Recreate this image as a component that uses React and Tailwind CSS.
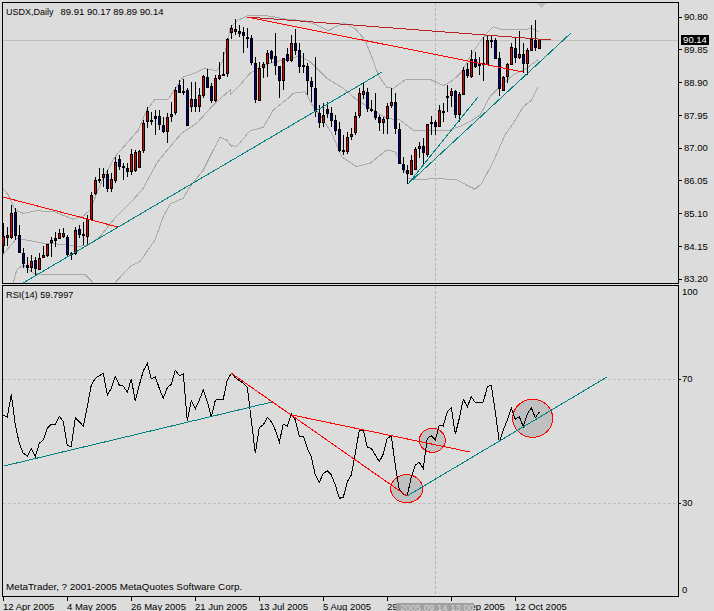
const c1 = [[670,760,708,735,'r'],[680,738,707,711,'r'],[615,718,640,713,'r'],[625,720,637,705,'b'],[675,760,705,758,'b'],[745,805,760,790,'b'],[770,820,795,802,'b'],[765,815,785,802,'r'],[770,825,780,805,'b'],[760,810,775,808,'r'],[738,775,766,772,'r'],[733,770,733,765,'r'],[712,770,720,728,'r'],[695,740,715,722,'b'],[688,718,700,716,'r'],[685,715,700,708,'r'],[705,770,712,762,'b'],[755,780,760,763,'b'],[680,765,690,760,'r'],[675,715,688,702,'b'],[665,735,702,706,'b'],[645,735,657,708,'r'],[577,660,585,658,'r'],[530,585,540,580,'r'],[505,550,537,540,'b'],[505,560,522,532,'r'],[510,575,522,565,'b'],[520,575,537,565,'r'],[470,550,488,540,'r'],[465,510,477,500,'b'],[490,540,500,503,'b'],[490,530,505,515,'b'],[448,525,463,515,'r'],[450,515,458,510,'r'],[450,503,455,502,'r'],[360,460,370,452,'r'],[320,385,335,365,'r'],[335,375,361,364,'b'],[330,405,350,355,'b'],[330,390,350,373,'b'],[352,400,375,395,'b'],[340,430,352,395,'r'],[305,365,343,350,'r'],[260,345,272,338,'r'],[240,280,255,278,'b'],[238,285,273,277,'b'],[265,375,272,375,'b'],[245,335,297,320,'r'],[245,335,297,320,'b'],[265,335,285,320,'r'],[225,295,230,285,'r'],[207,265,232,262,'b'],[250,310,260,302,'b'],[225,305,235,302,'r'],[185,240,225,235,'r'],[155,228,222,225,'b'],[115,230,118,220,'r']];
const c2 = [[75,118,85,97,'r'],[58,105,88,95,'b'],[75,110,95,99,'b'],[80,160,98,107,'b'],[85,145,112,116,'b'],[105,195,115,188,'b'],[170,310,190,298,'b'],[185,302,205,302,'r'],[185,235,193,203,'r'],[150,230,160,190,'r'],[150,190,153,175,'b'],[100,225,168,197,'b'],[200,295,200,242,'b'],[175,270,175,240,'r'],[145,185,163,180,'b'],[105,185,130,180,'r'],[87,165,130,150,'b'],[130,220,150,200,'b'],[160,220,197,200,'b'],[190,285,198,242,'b'],[230,305,243,260,'b'],[170,350,265,335,'b'],[315,385,340,368,'b'],[310,380,345,368,'r'],[305,355,328,340,'b'],[320,380,340,360,'b'],[345,405,360,390,'b'],[365,455,388,450,'b'],[405,465,450,453,'b'],[395,462,412,455,'r'],[385,420,403,410,'r'],[335,405,348,398,'r'],[265,355,280,347,'r'],[250,298,273,282,'r'],[265,335,277,325,'b'],[300,335,328,331,'b'],[280,360,333,353,'b'],[345,392,352,368,'b'],[350,402,358,368,'r'],[310,402,318,355,'r'],[265,325,307,315,'r'],[280,402,307,385,'b'],[370,490,387,490,'b'],[470,518,493,508,'b'],[495,552,512,520,'b'],[465,525,482,523,'r'],[440,510,447,507,'r'],[425,475,438,445,'r'],[415,495,438,458,'b'],[372,470,373,463,'r'],[347,405,366,370,'r'],[360,405,367,380,'b'],[315,375,330,378,'r'],[310,365,333,336,'b'],[255,335,290,293,'b'],[265,320,273,287,'r'],[270,355,273,342,'b'],[275,365,283,342,'r'],[200,285,210,283,'r'],[190,235,207,227,'b']];
const c3 = [[150,235,178,228,'r'],[155,205,178,198,'b'],[170,225,190,196,'b'],[110,242,190,193,'b'],[105,195,122,192,'r'],[105,145,120,123,'b'],[115,178,120,175,'b'],[155,288,175,265,'b'],[228,272,232,270,'r'],[190,248,193,230,'r'],[128,195,142,192,'r'],[110,190,145,172,'b'],[92,178,162,172,'r'],[130,220,162,190,'b'],[145,225,150,190,'r'],[75,152,118,150,'r'],[60,152,120,142,'b'],[118,148,120,145,'r']];
const candles = [...c1, ...c2, ...c3];

const P = (list, ox = 0, oy = 0) => list.map(([x, y]) => `${(x / 3 + ox).toFixed(1)},${(y / 3 + oy).toFixed(1)}`).join(' ');
const Z1 = (l) => P(l, 0, 0);
const Z2 = (l) => P(l, 230, 0);
const Z3 = (l) => P(l, 470, 0);

const upper = [Z1([[8,565],[25,585],[45,630],[70,640],[110,632],[165,636],[200,650],[220,658],[250,648],[270,630],[290,580],[310,535],[345,470],[385,425],[415,390],[440,330],[465,298],[505,297],[530,260],[548,232],[590,217],[612,205],[650,212],[665,190],[685,120]]),Z2([[0,85],[25,60],[52,48],[90,45],[130,50],[170,58],[225,62],[260,75],[295,92],[340,68],[375,85],[405,120],[425,170],[445,225],[470,262],[490,265],[525,240],[600,238],[640,257],[670,240],[695,215]]),Z3([[0,170],[30,125],[50,100],[70,80],[100,90],[130,88],[160,90],[185,85],[208,97]])].join(' ');
const middle = [Z1([[8,765],[50,715],[90,722],[130,730],[190,733],[230,740],[265,735],[300,710],[340,660],[390,610],[430,565],[470,490],[510,440],[545,400],[590,370],[640,315],[690,270]]),Z2([[0,285],[30,255],[60,220],[100,195],[160,180],[210,168],[240,185],[290,235],[340,265],[375,295],[420,325],[470,355],[510,360],[550,390],[600,392],[660,390],[700,375]]),Z3([[0,365],[30,345],[60,290],[100,250],[130,225],[170,205],[205,178]])].join(' ');
const lowerA = Z1([[40,848],[50,810],[70,795],[100,820],[140,825],[255,823],[280,848]]);
const lowerB = [Z1([[345,848],[390,800],[420,785],[465,720],[490,650],[510,612],[550,595],[570,560],[610,510],[640,450],[660,412],[680,420],[695,440]]),Z2([[0,435],[20,440],[45,410],[60,392],[100,382],[130,330],[180,290],[190,280],[225,275],[250,320],[270,345],[305,400],[335,470],[380,500],[420,490],[470,450],[495,455],[515,490],[535,535],[560,540],[620,535],[680,540]]),Z3([[0,560],[15,568],[35,550],[70,485],[105,405],[130,370],[160,320],[185,300],[205,260]])].join(' ');

const rsi = [P([[8,390],[22,397],[34,328],[46,420],[58,475],[70,505],[82,513],[94,490],[106,515],[118,475],[130,465],[142,430],[154,418],[166,418],[178,394],[190,410],[202,482],[214,484],[226,398],[238,410],[250,424],[262,365],[274,300],[286,280],[298,272],[310,265],[322,330],[334,310],[346,275],[358,300],[370,303],[382,322],[394,282],[406,348],[418,300],[430,258],[442,235],[454,282],[466,275],[478,310],[490,340],[502,308],[514,298],[526,256],[538,272],[550,267],[562,408],[574,346],[586,372],[598,345],[610,314],[622,350],[634,396],[646,346],[658,342],[670,342],[682,285]],0,285),P([[4,100],[16,113],[40,130],[52,142],[64,240],[76,340],[88,262],[100,255],[112,232],[124,245],[136,270],[148,307],[160,252],[172,258],[184,222],[196,240],[208,288],[220,288],[232,325],[244,350],[256,405],[268,427],[280,400],[292,393],[304,405],[316,435],[328,475],[340,472],[352,425],[364,405],[376,340],[388,270],[400,270],[412,322],[424,325],[436,345],[448,365],[460,342],[472,295],[484,288],[496,375],[508,450],[520,462],[532,467],[544,410],[556,375],[568,367],[580,385],[592,295],[604,287],[616,300],[628,255],[640,258],[652,215],[664,203],[676,283],[688,235],[700,178],[712,200]],230,340),P([[4,170],[16,188],[28,187],[40,186],[52,140],[64,136],[76,215],[88,307],[100,270],[112,240],[124,205],[136,238],[148,230],[160,260],[172,222],[184,203],[196,233],[208,216]],470,340)].join(' ');

const font = { fontFamily: '"Liberation Sans", Arial, sans-serif' };

function Candle({ i, d }) {
  const [wt, wb, bt, bb, k] = d;
  const cx = 3.5 + 4 * i;
  const t = Math.floor(bt / 3) + 0.5;
  const b = Math.max(Math.floor(bb / 3) + 0.5, t + 1);
  return (
    <g>
      <line x1={cx} x2={cx} y1={wt / 3} y2={wb / 3} stroke="#000" />
      <rect x={cx - 1} y={t} width={2} height={b - t} stroke="#000" fill={k === 'r' ? '#e00000' : '#000080'} />
    </g>
  );
}

const prices = ['90.80', '89.85', '88.90', '87.95', '87.00', '86.05', '85.10', '84.15', '83.20'];
const dates = ['12 Apr 2005', '4 May 2005', '26 May 2005', '21 Jun 2005', '13 Jul 2005', '5 Aug 2005', '29 Aug 2005', '22 Sep 2005', '12 Oct 2005'];

function RsiLabel({ label, tick, className }) {
  return (
    <div className={`flex h-[10px] items-center ${className}`}>
      <div className={`h-px w-[2px] ${tick ? 'bg-black' : ''}`} />
      <span className="ml-px leading-none">{label}</span>
    </div>
  );
}

export default function App() {
  return (
    <div className="relative h-[611px] w-[714px] overflow-hidden bg-[#dcdcdc] pl-[2px] pt-[2px] text-[9.5px] text-black" style={font}>
      <div className="flex h-[282px]">
        <div className="relative h-[282px] w-[677px] shrink-0 border border-black">
          <svg className="block" width="675" height="280" viewBox="3 3 675 280" shapeRendering="crispEdges" fill="none">
            <line x1="3" x2="678" y1="40.5" y2="40.5" stroke="#c0c0c0" />
            <line x1="435.5" x2="435.5" y1="3" y2="283" stroke="#b4b4b4" strokeDasharray="3 2" />
            <polyline points={upper} stroke="#a8a8a8" />
            <polyline points={middle} stroke="#a8a8a8" />
            <polyline points={lowerA} stroke="#a8a8a8" />
            <polyline points={lowerB} stroke="#a8a8a8" />
            {candles.map((d, i) => <Candle key={i} i={i} d={d} />)}
            <line x1="3" y1="197" x2="118" y2="227" stroke="#ff0000" />
            <line x1="23" y1="283" x2="382" y2="72" stroke="#008080" />
            <line x1="247" y1="17" x2="551" y2="40" stroke="#b22222" />
            <line x1="247" y1="17" x2="523" y2="72" stroke="#ff0000" />
            <line x1="408" y1="184" x2="478" y2="97" stroke="#008080" />
            <line x1="408" y1="184" x2="571" y2="33" stroke="#008080" />
            <polygon points="537,3 546,3 541.5,8" fill="#c0c0c0" />
          </svg>
          <div className="absolute left-[3px] top-[2px] flex gap-[7px] whitespace-nowrap leading-[14px]">
            <span className="text-[9px]">USDX,Daily</span>
            <span>89.91 90.17 89.89 90.14</span>
          </div>
        </div>
        <div className="relative mt-[10px] flex h-[272px] flex-col justify-between">
          {prices.map((p) => (
            <div key={p} className="flex h-[10px] items-center">
              <div className="h-px w-[3px] bg-black" />
              <span className="ml-[2px] leading-none">{p}</span>
            </div>
          ))}
          <div className="absolute left-[2px] top-[23px] flex h-[10px] w-[28px] items-center justify-center bg-black leading-none text-white">90.14</div>
        </div>
      </div>

      <div className="mt-px flex h-[312px]">
        <div className="relative h-[312px] w-[677px] shrink-0 border border-black">
          <svg className="block" width="675" height="310" viewBox="3 286 675 310" shapeRendering="crispEdges" fill="none">
            <line x1="3" x2="678" y1="379.5" y2="379.5" stroke="#c0c0c0" strokeDasharray="3 2" />
            <line x1="3" x2="678" y1="503.5" y2="503.5" stroke="#c0c0c0" strokeDasharray="3 2" />
            <line x1="435.5" x2="435.5" y1="286" y2="596" stroke="#b4b4b4" strokeDasharray="3 2" />
            <ellipse cx="406.7" cy="488.7" rx="16" ry="14" fill="#c0c0c0" stroke="#ff0000" />
            <ellipse cx="432.3" cy="440.3" rx="13" ry="12" fill="#c0c0c0" stroke="#ff0000" />
            <ellipse cx="532.7" cy="418.3" rx="20" ry="19" fill="#c0c0c0" stroke="#ff0000" />
            <polyline points={rsi} stroke="#000" />
            <line x1="4" y1="466" x2="272" y2="402" stroke="#008080" />
            <line x1="407" y1="496" x2="607" y2="377" stroke="#008080" />
            <line x1="231" y1="373" x2="407" y2="496" stroke="#ff0000" />
            <line x1="292" y1="415" x2="470" y2="452" stroke="#ff0000" />
          </svg>
          <div className="absolute left-[3px] top-[2px] whitespace-nowrap text-[9.2px] leading-[14px]">RSI(14) 59.7997</div>
          <div className="absolute bottom-[2px] left-[3px] whitespace-nowrap text-[9.9px] leading-[14px]">MetaTrader, ? 2001-2005 MetaQuotes Software Corp.</div>
        </div>
        <div className="pt-[2px]">
          <RsiLabel label="100" />
          <RsiLabel label="70" tick className="mt-[77px]" />
          <RsiLabel label="30" tick className="mt-[114px]" />
          <RsiLabel label="0" className="mt-[77px]" />
        </div>
      </div>

      <div className="flex pl-px">
        {dates.map((d) => (
          <div key={d} className="w-[64px] shrink-0">
            <div className="h-[4px] w-px bg-black" />
            <div className="mt-[1px] whitespace-nowrap leading-[10px]">{d}</div>
          </div>
        ))}
      </div>
      <div className="absolute left-[396px] top-[603px] h-[8px] w-[78px] overflow-hidden whitespace-nowrap bg-[#a0a0a0] pl-[4px] leading-[10px] text-[#d8d8d8]">2005.09.14 13:00</div>
    </div>
  );
}
